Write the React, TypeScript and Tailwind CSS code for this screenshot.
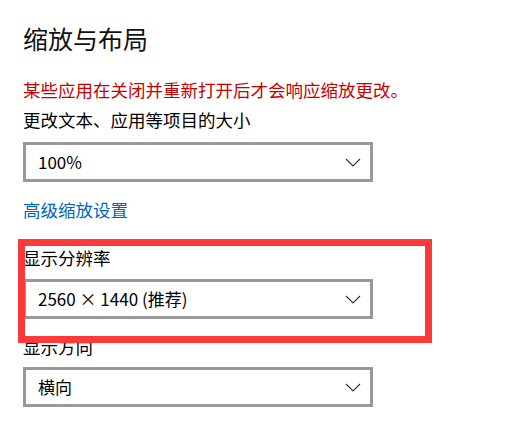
import React from "react";

function Chevron() {
  return (
    <svg width="16" height="9" viewBox="0 0 16 9" className="shrink-0">
      <path d="M1 1 L8 8 L15 1" fill="none" stroke="#333333" strokeWidth="1.1" />
    </svg>
  );
}

function Dropdown({ value }: { value: string }) {
  return (
    <div className="flex h-[40px] w-[350px] items-center justify-between border-[3px] border-[#999999] bg-white pl-[12px] pr-[9px]">
      <span className="text-[17px] leading-[24px] text-black">{value}</span>
      <Chevron />
    </div>
  );
}

export default function App() {
  return (
    <div
      className="relative h-[426px] w-[520px] overflow-hidden bg-white pl-[23px] pt-[22px]"
      style={{ fontFamily: '"Microsoft YaHei", "Noto Sans CJK SC", "Noto Sans", sans-serif' }}
    >
      <div className="text-[25px] leading-[32px] text-[#111111]">缩放与布局</div>
      <div className="mt-[24px] text-[17.5px] leading-[24px] text-[#c80000]">
        某些应用在关闭并重新打开后才会响应缩放更改。
      </div>
      <div className="mt-[6px] text-[17.5px] leading-[24px] text-black">更改文本、应用等项目的大小</div>
      <div className="mt-[10px]">
        <Dropdown value="100%" />
      </div>
      <div className="mt-[16px] text-[17.5px] leading-[24px] text-[#0067c0]">高级缩放设置</div>
      <div className="mt-[24px] text-[17.5px] leading-[24px] text-black">显示分辨率</div>
      <div className="mt-[9px]">
        <Dropdown value="2560 × 1440 (推荐)" />
      </div>
      <div className="mt-[16px] text-[17.5px] leading-[24px] text-black">显示方向</div>
      <div className="mt-[8px]">
        <Dropdown value="横向" />
      </div>
      <div className="pointer-events-none absolute left-[18px] top-[239px] h-[104px] w-[414px] border-[7px] border-[#fc3a3a]" />
    </div>
  );
}
